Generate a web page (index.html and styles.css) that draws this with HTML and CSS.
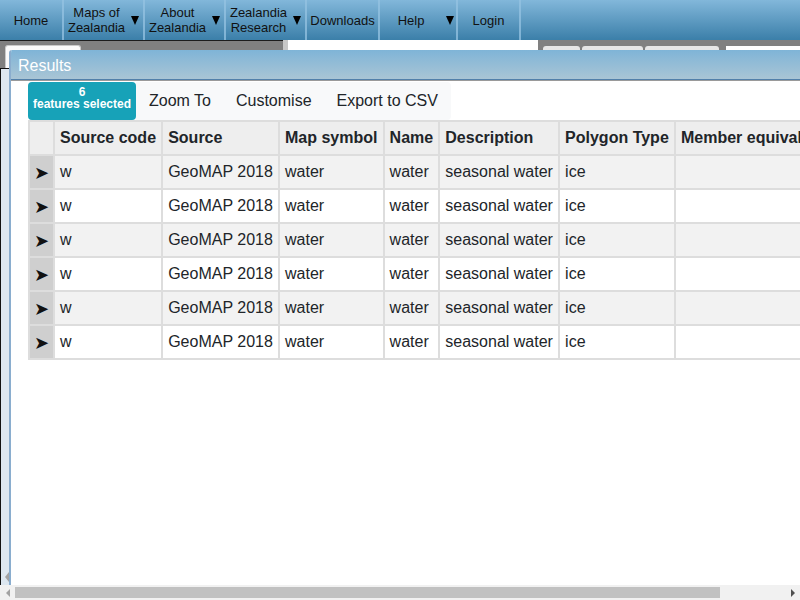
FILE: index.html
```html
<!DOCTYPE html>
<html lang="en">
<head>
<meta charset="utf-8">
<title>Results</title>
<link rel="stylesheet" href="styles.css">
</head>
<body>
<header class="nav">
  <div class="nav-item home"><span class="label">Home</span></div>
  <div class="nav-item maps"><span class="label">Maps of<br>Zealandia</span><span class="caret"></span></div>
  <div class="nav-item about"><span class="label">About<br>Zealandia</span><span class="caret"></span></div>
  <div class="nav-item research"><span class="label">Zealandia<br>Research</span><span class="caret"></span></div>
  <div class="nav-item downloads"><span class="label">Downloads</span></div>
  <div class="nav-item help"><span class="label">Help</span><span class="caret"></span></div>
  <div class="nav-item login"><span class="label">Login</span></div>
</header>
<main class="workspace">
  <div class="backdrop">
    <div class="bg-bar">
      <div class="bg-left"><div class="bg-tab"></div></div>
      <div class="bg-field"></div>
      <div class="bg-btn b1"></div>
      <div class="bg-btn b2"></div>
      <div class="bg-btn b3"></div>
      <div class="bg-input"></div>
    </div>
    <div class="bg-body"><span class="mini-arrow"></span></div>
    <div class="hscroll">
      <div class="sb-arrow"><span class="tri-left"></span></div>
      <div class="sb-thumb"></div>
      <div class="sb-track"></div>
      <div class="sb-arrow"><span class="tri-right"></span></div>
    </div>
  </div>
  <section class="dialog">
    <div class="dialog-title">Results</div>
    <div class="dialog-body">
      <div class="toolbar">
        <button class="btn-selected"><span>6</span><span>features selected</span></button>
        <div class="btn-group">
          <button class="btn-light">Zoom To</button>
          <button class="btn-light">Customise</button>
          <button class="btn-light">Export to CSV</button>
        </div>
      </div>
      <table class="results">
        <thead>
          <tr><th class="sel"></th><th>Source code</th><th>Source</th><th>Map symbol</th><th>Name</th><th>Description</th><th>Polygon Type</th><th>Member equivalent</th><th>Formation equivalent</th></tr>
        </thead>
        <tbody>
          <tr><td class="sel">➤</td><td>w</td><td>GeoMAP 2018</td><td>water</td><td>water</td><td>seasonal water</td><td>ice</td><td></td><td></td></tr>
          <tr><td class="sel">➤</td><td>w</td><td>GeoMAP 2018</td><td>water</td><td>water</td><td>seasonal water</td><td>ice</td><td></td><td></td></tr>
          <tr><td class="sel">➤</td><td>w</td><td>GeoMAP 2018</td><td>water</td><td>water</td><td>seasonal water</td><td>ice</td><td></td><td></td></tr>
          <tr><td class="sel">➤</td><td>w</td><td>GeoMAP 2018</td><td>water</td><td>water</td><td>seasonal water</td><td>ice</td><td></td><td></td></tr>
          <tr><td class="sel">➤</td><td>w</td><td>GeoMAP 2018</td><td>water</td><td>water</td><td>seasonal water</td><td>ice</td><td></td><td></td></tr>
          <tr><td class="sel">➤</td><td>w</td><td>GeoMAP 2018</td><td>water</td><td>water</td><td>seasonal water</td><td>ice</td><td></td><td></td></tr>
        </tbody>
      </table>
    </div>
  </section>
</main>
</body>
</html>
```
FILE: styles.css
```css
* { box-sizing: border-box; }
html, body {
  margin: 0;
  width: 800px;
  height: 600px;
  overflow: hidden;
  font-family: "Liberation Sans", Arial, sans-serif;
  color: #212529;
}

/* top navigation */
.nav {
  display: flex;
  height: 40px;
  background: linear-gradient(#82b7da, #3b7fa9);
}
.nav-item {
  display: flex;
  align-items: center;
  justify-content: center;
  gap: 6px;
  height: 40px;
  border-right: 2px solid rgba(150, 195, 225, 0.75);
  font-size: 13px;
  line-height: 15px;
  color: #111;
}
.nav-item .label { min-width: 57px; text-align: center; }
.caret {
  width: 0; height: 0;
  border-left: 4.5px solid transparent;
  border-right: 4.5px solid transparent;
  border-top: 9px solid #000;
  margin-top: 1px;
}
.home { width: 64px; }
.maps, .about, .research { width: 81px; }
.downloads { width: 73px; }
.help { width: 78px; }
.login { width: 63px; }

/* workspace behind the dialog */
.workspace {
  position: relative;
  height: 560px;
}
.backdrop {
  display: flex;
  flex-direction: column;
  height: 100%;
}
.bg-bar {
  display: flex;
  align-items: stretch;
  height: 28px;
  background: #808080;
}
.bg-left {
  width: 283px;
  border-top: 1px solid #1c1c1c;
  padding: 4px 0 0 5px;
}
.bg-tab {
  width: 76px;
  height: 100%;
  background: #fafafa;
  border: 1px solid #c9c9c9;
  border-bottom: none;
  border-radius: 3px 3px 0 0;
}
.bg-field {
  width: 255px;
  background: #fff;
  border-left: 5px solid #c8c8c8;
}
.bg-btn {
  margin-top: 6px;
  background: #e6e6e6;
  border-radius: 3px 3px 0 0;
}
.b1 { margin-left: 5px; width: 37px; }
.b2 { margin-left: 2px; width: 61px; }
.b3 { margin-left: 2px; width: 74px; }
.bg-input {
  flex: 1;
  margin: 6px 0 0 7px;
  background: #fff;
}
.bg-body {
  flex: 1;
  display: flex;
  align-items: flex-end;
  background: #dde7f0;
  border-top: 1px solid #111;
  border-left: 1px solid #111;
  padding: 0 0 3px 4px;
}
.mini-arrow {
  width: 0; height: 0;
  border-top: 5px solid transparent;
  border-bottom: 5px solid transparent;
  border-right: 4px solid #a3a3a3;
}

/* fake horizontal scrollbar */
.hscroll {
  display: flex;
  align-items: center;
  height: 15px;
  background: #f1f1f1;
}
.sb-arrow {
  width: 15px;
  height: 15px;
  display: flex;
  align-items: center;
  justify-content: center;
}
.tri-left {
  width: 0; height: 0;
  border-top: 4px solid transparent;
  border-bottom: 4px solid transparent;
  border-right: 4px solid #a3a3a3;
}
.tri-right {
  width: 0; height: 0;
  border-top: 4px solid transparent;
  border-bottom: 4px solid transparent;
  border-left: 4px solid #505050;
}
.sb-thumb {
  width: 705px;
  height: 11px;
  background: #c1c1c1;
}
.sb-track { flex: 1; }

/* Results dialog */
.dialog {
  position: absolute;
  left: 9px;
  top: 10px;
  bottom: 15px;
  width: 1100px;
  background: #fff;
  border-left: 2px solid #8aadce;
  border-radius: 3px 0 0 0;
  overflow: hidden;
}
.dialog-title {
  height: 30px;
  padding: 7px 0 0 7px;
  background: linear-gradient(#7fb4d7, #a9c5d5);
  border-bottom: 1px solid #5280aa;
  box-shadow: 0 1px 0 #9a9a9a;
  color: #fff;
  font-size: 16px;
  line-height: 18px;
}
.dialog-body {
  padding: 2px 0 0 17px;
}
.toolbar {
  display: flex;
  height: 38px;
}
.btn-selected {
  display: flex;
  flex-direction: column;
  align-items: center;
  justify-content: center;
  width: 108px;
  border: none;
  border-radius: 4px;
  background: #17a2b8;
  color: #fff;
  font-family: "Liberation Sans", Arial, sans-serif;
  font-weight: bold;
  font-size: 12px;
  line-height: 12px;
  padding: 0 0 6px;
}
.btn-group {
  display: flex;
  background: #f8f9fa;
  border-radius: 0 4px 4px 0;
  padding-right: 1px;
}
.btn-light {
  border: none;
  background: transparent;
  font-family: "Liberation Sans", Arial, sans-serif;
  font-size: 16px;
  color: #212529;
  padding: 0 12px 0 13px;
}

/* table */
.results {
  border-collapse: separate;
  border-spacing: 2px;
  background: #dddddd;
  white-space: nowrap;
  font-size: 16px;
}
.results th, .results td {
  height: 32px;
  padding: 0 5.15px 0 5px;
  text-align: left;
  vertical-align: middle;
}
.results th {
  background: #eeeeee;
  font-weight: bold;
}
.results tbody tr:nth-child(odd) td { background: #f2f2f2; }
.results tbody tr:nth-child(even) td { background: #ffffff; }
.results .sel {
  width: 23px;
  padding: 0;
  text-align: center;
}
.results tbody tr td.sel {
  background: #cfcfcf;
  font-family: "DejaVu Sans", sans-serif;
  font-size: 18px;
  color: #111;
}
```
